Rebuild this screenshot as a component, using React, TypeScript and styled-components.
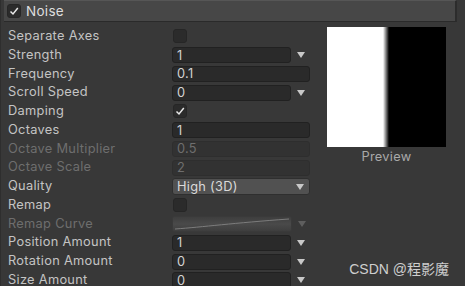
import React from 'react';
import styled, { createGlobalStyle } from 'styled-components';

const GlobalStyle = createGlobalStyle`
  html, body {
    margin: 0;
    padding: 0;
    background: #383838;
  }
`;

const Panel = styled.div`
  position: relative;
  width: 465px;
  height: 286px;
  overflow: hidden;
  background: #383838;
  font-family: Inter, "Noto Sans", sans-serif;
  font-size: 12.8px;
  letter-spacing: 0.3px;
  color: #c4c4c4;
  border-left: 1px solid #2e2e2e;
  box-sizing: border-box;
`;

const Header = styled.div`
  display: flex;
  align-items: center;
  gap: 5px;
  height: 22px;
  width: 453px;
  margin-left: 3px;
  padding-left: 2px;
  box-sizing: border-box;
  background: #474747;
  border-top: 1px solid #565656;
  border-bottom: 1px solid #2a2a2a;
  border-right: 2px solid #2c2c2c;
  color: #dedede;
  font-size: 13.5px;
`;

const Body = styled.div`
  display: flex;
  padding: 5px 0 0 7px;
`;

const Grid = styled.div`
  display: grid;
  grid-template-columns: 164px 138px;
  grid-auto-rows: 18.77px;
  align-items: center;
`;

const Label = styled.div<{ $disabled?: boolean }>`
  color: ${p => (p.$disabled ? '#6e6e6e' : '#c4c4c4')};
  white-space: nowrap;
  line-height: 1;
`;

const Control = styled.div`
  display: flex;
  align-items: center;
  height: 100%;
`;

const Field = styled.div<{ $disabled?: boolean; $short?: boolean }>`
  display: flex;
  align-items: center;
  width: ${p => (p.$short ? '120px' : '138px')};
  height: 16px;
  padding-left: 4px;
  box-sizing: border-box;
  background: ${p => (p.$disabled ? '#323232' : '#2a2a2a')};
  border: 1px solid ${p => (p.$disabled ? '#2e2e2e' : '#212121')};
  border-radius: 3px;
  color: ${p => (p.$disabled ? '#6e6e6e' : '#d2d2d2')};
`;

const Arrow = styled.div<{ $disabled?: boolean }>`
  width: 18px;
  display: flex;
  justify-content: center;
  padding-left: 1px;

  &::after {
    content: '';
    border-left: 4.5px solid transparent;
    border-right: 4.5px solid transparent;
    border-top: 6px solid ${p => (p.$disabled ? '#5e5e5e' : '#c8c8c8')};
  }
`;

const Check = styled.div`
  width: 14px;
  height: 14px;
  box-sizing: border-box;
  background: #2b2b2b;
  border: 1px solid #262626;
  border-radius: 3px;
  margin-left: 1px;
  display: flex;
  align-items: center;
  justify-content: center;
`;

const Popup = styled.div`
  display: flex;
  align-items: center;
  justify-content: space-between;
  width: 138px;
  height: 17px;
  padding: 0 5px 0 4px;
  box-sizing: border-box;
  background: #515151;
  border: 1px solid #2f2f2f;
  border-radius: 3px;
  color: #dadada;

  &::after {
    content: '';
    border-left: 4.5px solid transparent;
    border-right: 4.5px solid transparent;
    border-top: 6px solid #c8c8c8;
  }
`;

const Curve = styled.div`
  width: 120px;
  height: 16px;
  box-sizing: border-box;
  background: linear-gradient(#3e3e3e 0, #4a4a4a 50%, #3e3e3e 100%);
  border: 1px solid #3a3a3a;
  border-radius: 2px;
`;

const PreviewCol = styled.div`
  display: flex;
  flex-direction: column;
  align-items: center;
  margin-left: 17px;
  width: 119px;
  gap: 2px;
`;

const PreviewImage = styled.div`
  width: 119px;
  height: 120px;
  background: linear-gradient(to right, #fff 0, #fff 56px, #000 62px, #000 100%);
`;

const PreviewLabel = styled.div`
  color: #a9a9a9;
  font-size: 12.8px;
`;

const Watermark = styled.div`
  position: absolute;
  right: 16px;
  bottom: 8px;
  color: rgba(235, 235, 235, 0.85);
  font-family: "Liberation Sans", "Noto Sans CJK SC", sans-serif;
  font-size: 14px;
  letter-spacing: 0;
`;

const Tick = ({ size = 10 }: { size?: number }) => (
  <svg width={size} height={size} viewBox="0 0 10 10">
    <path d="M1.5 5.5 L4 8 L8.8 2" fill="none" stroke="#e8e8e8" strokeWidth="1.5" />
  </svg>
);

type Row = {
  label: string;
  kind: 'check' | 'field' | 'drop' | 'popup' | 'curve';
  value?: string;
  checked?: boolean;
  disabled?: boolean;
};

const rows: Row[] = [
  { label: 'Separate Axes', kind: 'check' },
  { label: 'Strength', kind: 'drop', value: '1' },
  { label: 'Frequency', kind: 'field', value: '0.1' },
  { label: 'Scroll Speed', kind: 'drop', value: '0' },
  { label: 'Damping', kind: 'check', checked: true },
  { label: 'Octaves', kind: 'field', value: '1' },
  { label: 'Octave Multiplier', kind: 'field', value: '0.5', disabled: true },
  { label: 'Octave Scale', kind: 'field', value: '2', disabled: true },
  { label: 'Quality', kind: 'popup', value: 'High (3D)' },
  { label: 'Remap', kind: 'check' },
  { label: 'Remap Curve', kind: 'curve', disabled: true },
  { label: 'Position Amount', kind: 'drop', value: '1' },
  { label: 'Rotation Amount', kind: 'drop', value: '0' },
  { label: 'Size Amount', kind: 'drop', value: '0' },
];

const renderControl = (r: Row) => {
  switch (r.kind) {
    case 'check':
      return <Check>{r.checked && <Tick />}</Check>;
    case 'field':
      return <Field $disabled={r.disabled}>{r.value}</Field>;
    case 'drop':
      return (
        <>
          <Field $short>{r.value}</Field>
          <Arrow />
        </>
      );
    case 'popup':
      return <Popup>{r.value}</Popup>;
    case 'curve':
      return (
        <>
          <Curve>
            <svg width="118" height="14" viewBox="0 0 118 14">
              <path d="M2 12 C30 10, 60 6, 116 2" stroke="#7c7c7c" strokeWidth="1" fill="none" />
            </svg>
          </Curve>
          <Arrow $disabled />
        </>
      );
  }
};

export default function App() {
  return (
    <Panel>
      <GlobalStyle />
      <Header>
        <Check>
          <Tick />
        </Check>
        Noise
      </Header>
      <Body>
        <Grid>
          {rows.map(r => (
            <React.Fragment key={r.label}>
              <Label $disabled={r.disabled}>{r.label}</Label>
              <Control>{renderControl(r)}</Control>
            </React.Fragment>
          ))}
        </Grid>
        <PreviewCol>
          <PreviewImage />
          <PreviewLabel>Preview</PreviewLabel>
        </PreviewCol>
      </Body>
      <Watermark>CSDN @程影魔</Watermark>
    </Panel>
  );
}
